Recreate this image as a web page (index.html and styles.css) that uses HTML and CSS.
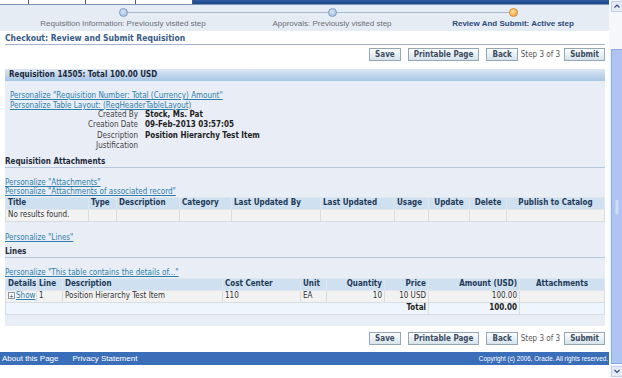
FILE: index.html
```html
<!DOCTYPE html>
<html>
<head lang="en">
    <meta charset="UTF-8">
    <link rel="stylesheet" href="styles.css">
    <title>Checkout: Review and Submit Requisition</title>
</head>
<body>
<div id="window">
<div id="page">
    <div class="tabs">
        <span class="tab t1"></span>
        <span class="tab t2"></span>
        <span class="tab t3"></span>
        <span class="tab t4"></span>
        <span class="tabfill"></span>
    </div>

    <div class="train">
        <div class="trainline"></div>
        <div class="step s1">
            <span class="dot"></span>
            <span class="stepLabel">Requisition Information: Previously visited step</span>
        </div>
        <div class="step s2">
            <span class="dot"></span>
            <span class="stepLabel">Approvals: Previously visited step</span>
        </div>
        <div class="step s3">
            <span class="dot active"></span>
            <span class="stepLabel activeLabel">Review And Submit: Active step</span>
        </div>
    </div>

    <div class="content">
        <h1 class="pageTitle">Checkout: Review and Submit Requisition</h1>

        <div class="buttonBar">
            <button class="btn">Save</button>
            <button class="btn">Printable Page</button>
            <button class="btn">Back</button>
            <span class="stepText">Step 3 of 3</span>
            <button class="btn">Submit</button>
        </div>

        <div class="regionHeader">Requisition 14505: Total 100.00 USD</div>
        <div class="region">
            <a class="plink indent">Personalize "Requisition Number: Total (Currency) Amount"</a>
            <a class="plink indent">Personalize Table Layout: (ReqHeaderTableLayout)</a>
            <div class="fields">
                <span class="label">Created By</span><span class="value">Stock, Ms. Pat</span>
                <span class="label">Creation Date</span><span class="value">09-Feb-2013 03:57:05</span>
                <span class="label">Description</span><span class="value">Position Hierarchy Test Item</span>
                <span class="label">Justification</span><span class="value"></span>
            </div>

            <h2 class="subHeader">Requisition Attachments</h2>
            <a class="plink gapTop">Personalize "Attachments"</a>
            <a class="plink">Personalize "Attachments of associated record"</a>
            <table class="grid">
                <colgroup>
                    <col style="width:83px"><col style="width:28px"><col style="width:63px"><col style="width:52px"><col style="width:89px">
                    <col style="width:74px"><col style="width:34px"><col style="width:41px"><col style="width:37px"><col style="width:98px">
                </colgroup>
                <tr>
                    <th>Title</th><th>Type</th><th>Description</th><th>Category</th><th>Last Updated By</th>
                    <th>Last Updated</th><th>Usage</th><th class="c">Update</th><th class="c">Delete</th><th class="c">Publish to Catalog</th>
                </tr>
                <tr>
                    <td>No results found.</td><td></td><td></td><td></td><td></td><td></td><td></td><td></td><td></td><td></td>
                </tr>
            </table>

            <a class="plink linesLink">Personalize "Lines"</a>
            <h2 class="subHeader lines">Lines</h2>
            <a class="plink gapTop">Personalize "This table contains the details of..."</a>
            <table class="grid">
                <colgroup>
                    <col style="width:31px"><col style="width:26px"><col style="width:160px"><col style="width:78px"><col style="width:26px">
                    <col style="width:58px"><col style="width:44px"><col style="width:91px"><col style="width:85px">
                </colgroup>
                <tr>
                    <th>Details</th><th>Line</th><th>Description</th><th>Cost Center</th><th>Unit</th>
                    <th class="r">Quantity</th><th class="r">Price</th><th class="r">Amount (USD)</th><th class="c">Attachments</th>
                </tr>
                <tr>
                    <td class="details"><span class="plus">+</span><a class="showLink">Show</a></td><td>1</td><td>Position Hierarchy Test Item</td><td>110</td><td>EA</td>
                    <td class="r">10</td><td class="r">10 USD</td><td class="r">100.00</td><td></td>
                </tr>
                <tr class="totalRow">
                    <td colspan="7" class="r">Total</td><td class="r">100.00</td><td></td>
                </tr>
            </table>
        </div>

        <div class="buttonBar bottom">
            <button class="btn">Save</button>
            <button class="btn">Printable Page</button>
            <button class="btn">Back</button>
            <span class="stepText">Step 3 of 3</span>
            <button class="btn">Submit</button>
        </div>
    </div>

    <div class="footer">
        <a>About this Page</a>
        <a>Privacy Statement</a>
        <span class="copyright">Copyright (c) 2006, Oracle. All rights reserved.</span>
    </div>
</div>
<svg class="scrollbar" width="14" height="378" viewBox="0 0 14 378">
    <rect x="0" y="0" width="14" height="378" fill="#f5f7fb"/>
    <rect x="2.5" y="1.5" width="11" height="10" fill="#e4ebf7" stroke="#c3d1e8"/>
    <path d="M5.5 7.5 L8 5 L10.5 7.5" fill="none" stroke="#2f4d80" stroke-width="1.2"/>
    <rect x="2.5" y="49.5" width="11" height="314" fill="#aec5f1" stroke="#8eaadf"/>
    <path d="M8 200 V214" stroke="#cddcf7" stroke-width="3"/>
    <rect x="2.5" y="366.5" width="11" height="10" fill="#e4ebf7" stroke="#c3d1e8"/>
    <path d="M5.5 370 L8 372.5 L10.5 370" fill="none" stroke="#2f4d80" stroke-width="1.2"/>
</svg>
</div>
</body>
</html>
```

FILE: styles.css
```css
body {
    margin: 0;
    font-family: "DejaVu Sans Condensed", "DejaVu Sans", sans-serif;
    font-size: 8px;
    color: #333;
    background: #fff;
}
#window {
    display: flex;
    width: 622px;
    height: 378px;
    overflow: hidden;
}
#page {
    flex: 0 0 608px;
}

/* tab strip */
.tabs {
    display: flex;
    height: 4px;
    border-bottom: 1px solid #7d93b5;
}
.tab {
    background: #fff;
    border-right: 1px solid #4a5a78;
}
.t1 { width: 28px; }
.t2 { width: 56px; }
.t3 { width: 49px; }
.t4 { width: 56px; }
.tabfill {
    flex: 1;
    background: linear-gradient(#2c5aa0, #1c4789);
}

/* train */
.train {
    position: relative;
    height: 26px;
    background: #e6ecf4;
    font-family: "Liberation Sans", Arial, sans-serif;
}
.trainline {
    position: absolute;
    left: 123px;
    width: 390px;
    top: 7px;
    border-top: 1px solid #a9b8cb;
}
.step {
    position: absolute;
    top: 0;
    width: 200px;
    margin-left: -100px;
    text-align: center;
}
.s1 { left: 123px; }
.s2 { left: 332px; }
.s3 { left: 513px; }
.dot {
    position: relative;
    display: block;
    width: 7px;
    height: 7px;
    margin: 3px auto 0;
    border-radius: 50%;
    background: radial-gradient(circle at 40% 35%, #d4e4f4, #9dbde0);
    border: 1px solid #7c9cc3;
}
.dot.active {
    background: radial-gradient(circle at 40% 35%, #ffe0a0, #f19a2e);
    border-color: #d98a2a;
}
.stepLabel {
    display: block;
    margin-top: 2px;
    font-size: 8px;
    line-height: 10px;
    color: #6a6f78;
}
.activeLabel {
    font-weight: bold;
    color: #2b4a7a;
}

/* content */
.content {
    padding: 0 4px 0 5px;
}
.pageTitle {
    margin: 0;
    padding-top: 2px;
    font-size: 8.5px;
    line-height: 11px;
    color: #375a88;
    border-bottom: 1px solid #a5b4cc;
}
.buttonBar {
    display: flex;
    justify-content: flex-end;
    align-items: center;
    gap: 7px;
    margin-top: 3px;
    height: 13px;
}
.buttonBar.bottom {
    margin-top: 6px;
}
.btn {
    min-width: 31px;
    height: 13px;
    margin: 0;
    padding: 0 5px;
    font-family: inherit;
    font-size: 8px;
    font-weight: bold;
    color: #3c4c62;
    background: linear-gradient(#fbfdfe, #d5e3ea);
    border: 1px solid #97a6b4;
    border-radius: 0;
}
.stepText {
    color: #555;
    margin: 0 -3px 0 -4px;
}

.regionHeader {
    margin-top: 8px;
    height: 12px;
    line-height: 12px;
    padding-left: 4px;
    font-weight: bold;
    color: #1d2a3b;
    background: linear-gradient(#dce8f4, #a6c6e4);
}
.region {
    background: #e9eef6;
    padding: 10px 0 11px;
}
.plink {
    display: block;
    color: #2f7eab;
    text-decoration: underline;
    line-height: 9.5px;
}
.plink.indent {
    padding-left: 5px;
}
.fields {
    display: grid;
    grid-template-columns: 133px 1fr;
    column-gap: 7px;
    line-height: 10.4px;
}
.label {
    text-align: right;
    color: #444;
}
.value {
    font-weight: bold;
    color: #222;
}
.subHeader {
    margin: 4px 0 0;
    font-size: 8px;
    line-height: 11px;
    color: #1f2a3a;
    border-bottom: 1px solid #b7c6da;
}
.subHeader.lines {
    margin-top: 4px;
}
.gapTop {
    margin-top: 10px;
}
.linesLink {
    margin-top: 11px;
}

/* tables */
.grid {
    width: 599px;
    table-layout: fixed;
    border-collapse: collapse;
    border: 1px solid #c7cfd9;
    font-size: 8px;
}
.grid th,
.grid td {
    height: 11px;
    padding: 0 2px;
    line-height: 10px;
    white-space: nowrap;
    overflow: hidden;
}
.grid th {
    text-align: left;
    font-weight: bold;
    color: #233a58;
    background: #cfe0f0;
    border: 1px solid #dfe6ee;
}
.grid td {
    background: #f2f2f2;
    border: 1px solid #d8dde4;
}
.grid .r { text-align: right; }
.grid .c { text-align: center; }
.totalRow td {
    background: #eef5fc;
    font-weight: bold;
    color: #222;
}
.details {
    padding-left: 1px;
}
.plus {
    display: inline-block;
    width: 5px;
    height: 5px;
    border: 1px solid #8a97a8;
    background: #fff;
    font-size: 6px;
    line-height: 5px;
    text-align: center;
    color: #333;
    margin-right: 1px;
}
.showLink {
    color: #2f7eab;
    text-decoration: underline;
}

/* footer */
.footer {
    display: flex;
    align-items: center;
    margin-top: 7px;
    height: 13px;
    background: #3a6eb8;
    font-family: "Liberation Sans", Arial, sans-serif;
    font-size: 8px;
    color: #fff;
}
.footer a {
    margin-left: 2px;
    margin-right: 12px;
}
.copyright {
    margin-left: auto;
    margin-right: 1px;
    font-size: 6.3px;
}

/* scrollbar */
.scrollbar {
    flex: 0 0 14px;
    display: block;
}
```
